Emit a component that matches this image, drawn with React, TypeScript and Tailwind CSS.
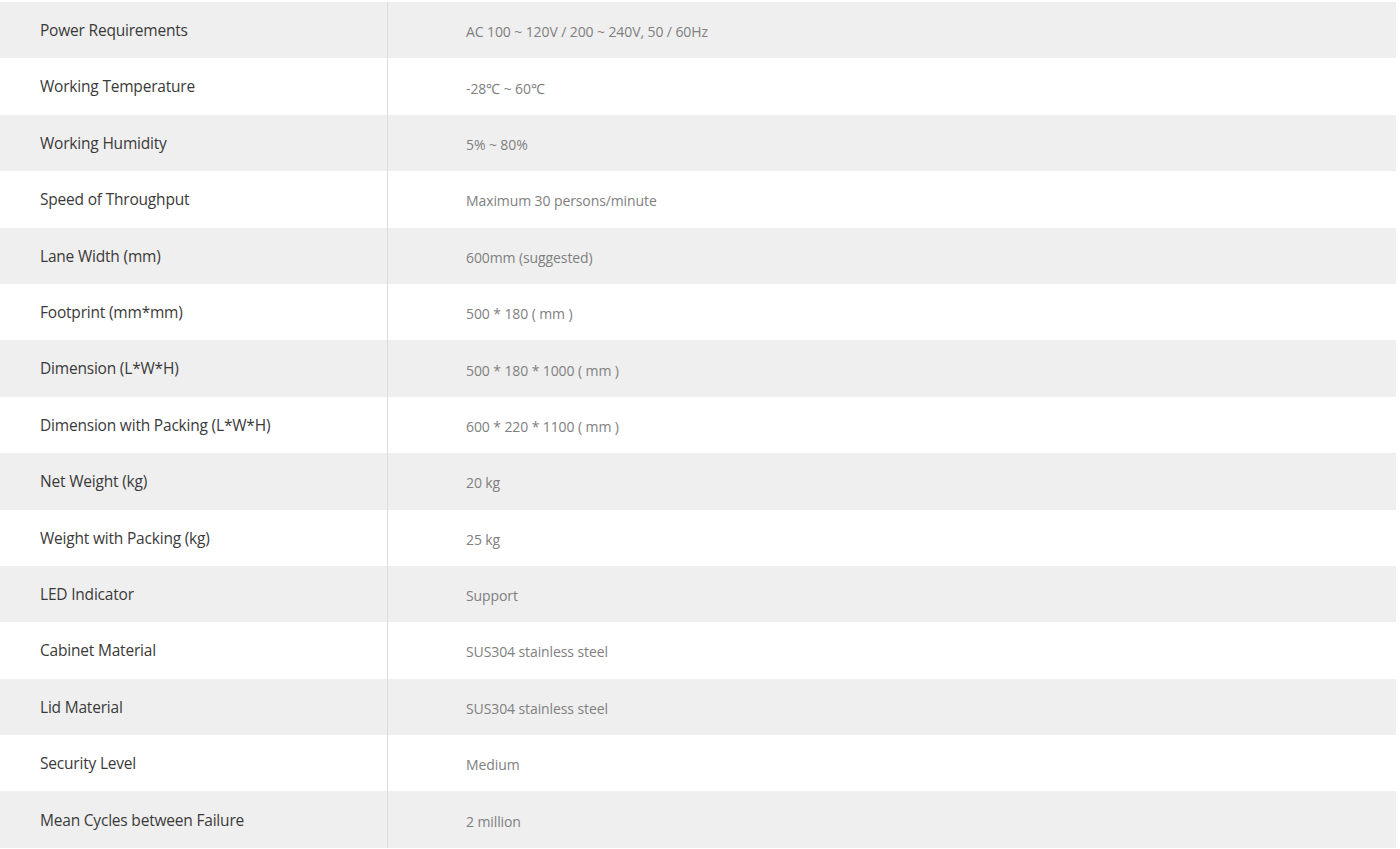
import React from 'react';

const specs: [string, string][] = [
  ['Power Requirements', 'AC 100 ~ 120V / 200 ~ 240V, 50 / 60Hz'],
  ['Working Temperature', '-28℃ ~ 60℃'],
  ['Working Humidity', '5% ~ 80%'],
  ['Speed of Throughput', 'Maximum 30 persons/minute'],
  ['Lane Width (mm)', '600mm (suggested)'],
  ['Footprint (mm*mm)', '500 * 180 ( mm )'],
  ['Dimension (L*W*H)', '500 * 180 * 1000 ( mm )'],
  ['Dimension with Packing (L*W*H)', '600 * 220 * 1100 ( mm )'],
  ['Net Weight (kg)', '20 kg'],
  ['Weight with Packing (kg)', '25 kg'],
  ['LED Indicator', 'Support'],
  ['Cabinet Material', 'SUS304 stainless steel'],
  ['Lid Material', 'SUS304 stainless steel'],
  ['Security Level', 'Medium'],
  ['Mean Cycles between Failure', '2 million'],
];

export default function App() {
  return (
    <div className="w-[1400px] h-[849px] bg-white pt-[2px] overflow-hidden" style={{ fontFamily: '"Open Sans", sans-serif' }}>
      <div className="w-[1396px]">
        {specs.map(([label, value], i) => (
          <div
            key={label}
            className={`flex h-[56.4px] ${i % 2 === 0 ? 'bg-[#efefef]' : 'bg-white'}`}
          >
            <div className="w-[388px] shrink-0 border-r border-[#dcdcdc] flex items-center pl-[40px] pt-[1px] text-[15.5px] text-[#3a3a3a] tracking-[-0.2px]">
              {label}
            </div>
            <div className="flex-1 flex items-center pl-[78px] pt-[3px] text-[14px] text-[#808080] tracking-[-0.1px]">
              {value}
            </div>
          </div>
        ))}
      </div>
    </div>
  );
}
